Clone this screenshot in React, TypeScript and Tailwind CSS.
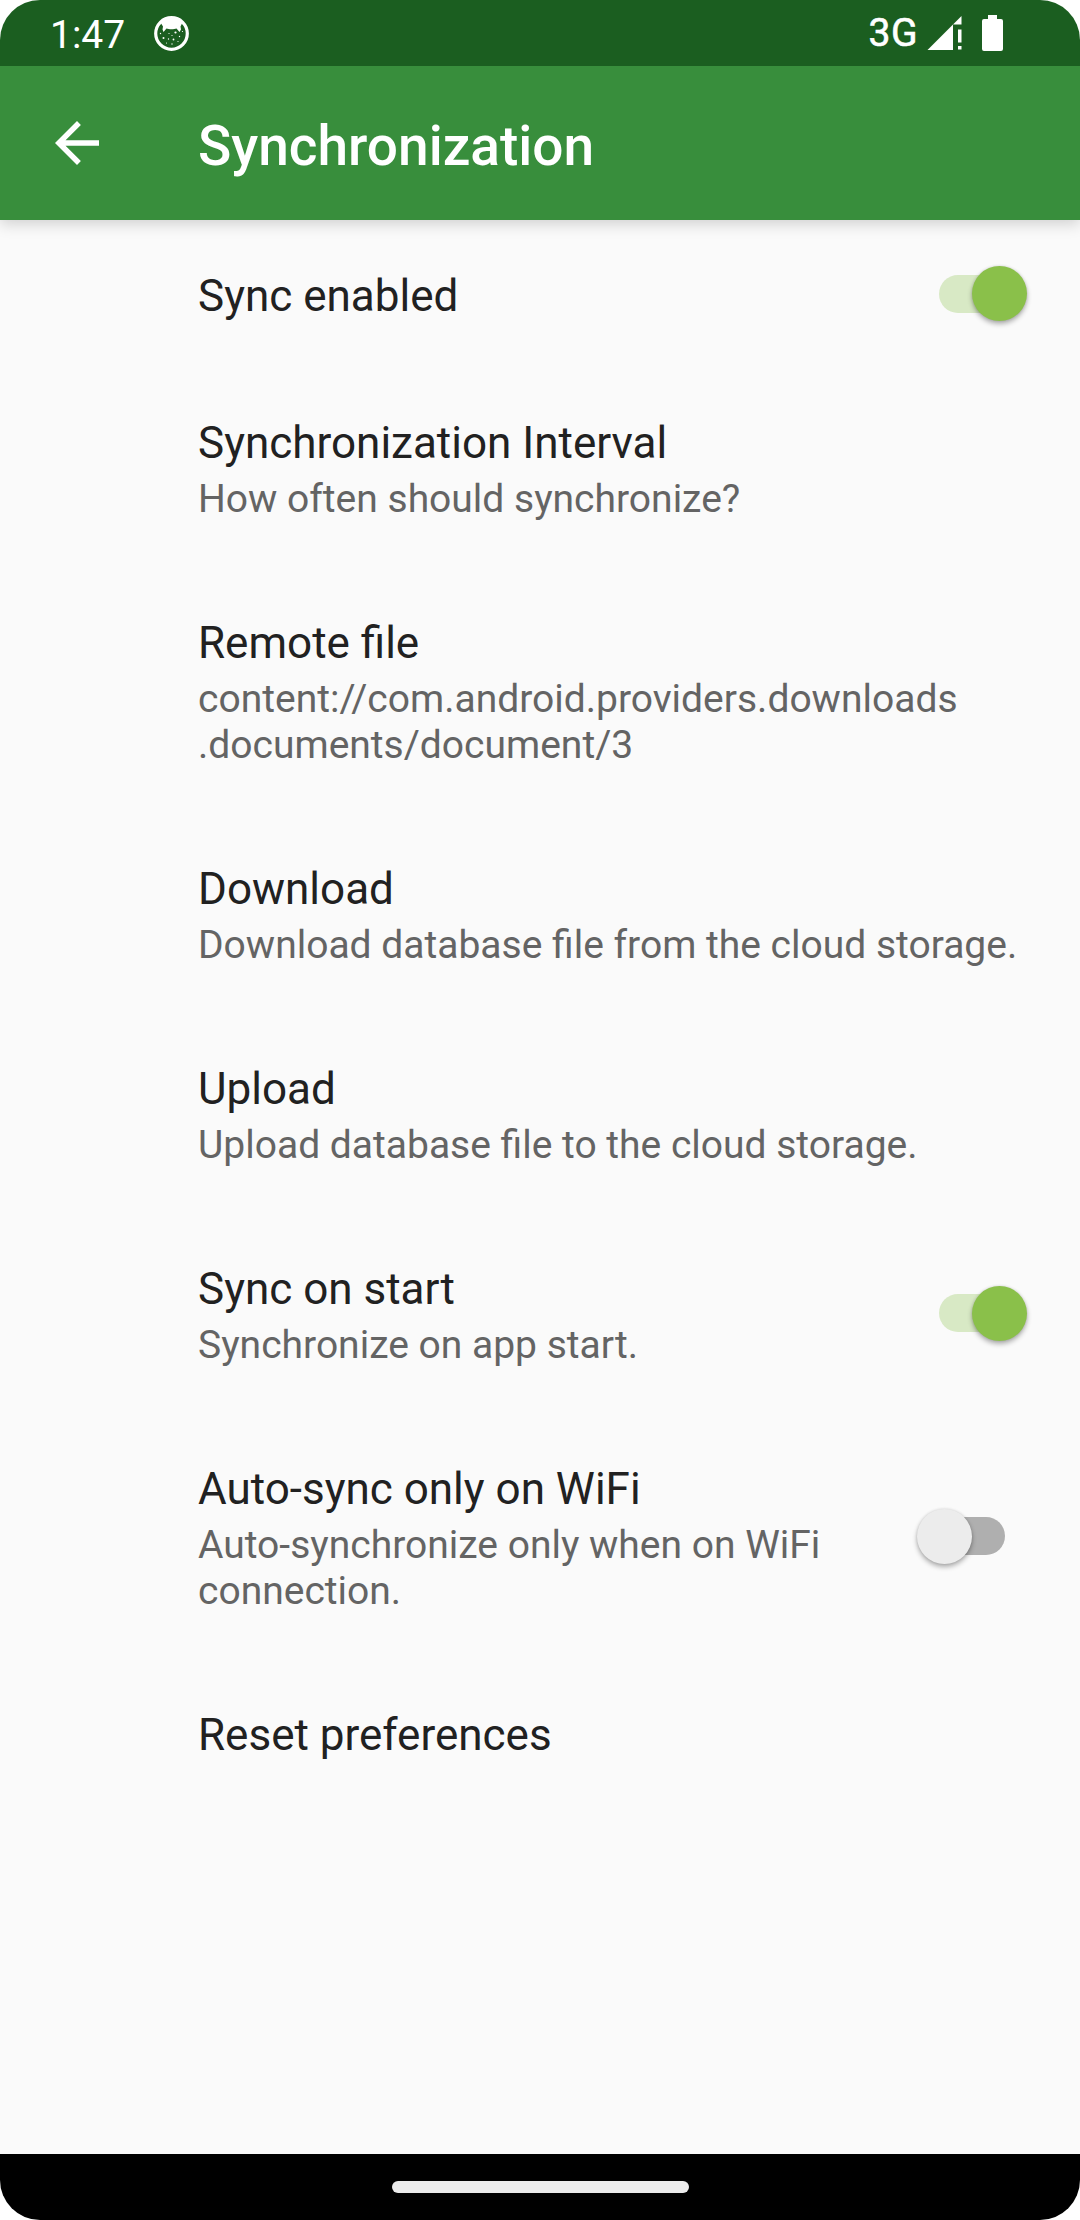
type Preference = {
  title: string;
  summary?: string;
  checked?: boolean;
};

const preferences: Preference[] = [
  { title: "Sync enabled", checked: true },
  { title: "Synchronization Interval", summary: "How often should synchronize?" },
  {
    title: "Remote file",
    summary: "content://com.android.providers.downloads\n.documents/document/3",
  },
  { title: "Download", summary: "Download database file from the cloud storage." },
  { title: "Upload", summary: "Upload database file to the cloud storage." },
  { title: "Sync on start", summary: "Synchronize on app start.", checked: true },
  {
    title: "Auto-sync only on WiFi",
    summary: "Auto-synchronize only when on WiFi\nconnection.",
    checked: false,
  },
  { title: "Reset preferences" },
];

function Switch({ checked }: { checked: boolean }) {
  return (
    <div
      role="switch"
      aria-checked={checked}
      className={`mr-[31px] flex h-[38px] w-[66px] shrink-0 items-center rounded-full ${
        checked ? "justify-end bg-[#d8e9c5]" : "justify-start bg-[#afafaf]"
      }`}
    >
      <div
        className={`size-[55px] shrink-0 rounded-full shadow-[0_3px_5px_rgba(0,0,0,0.3),0_0_3px_rgba(0,0,0,0.12)] ${
          checked ? "-mr-[22px] bg-[#8ac04a]" : "-ml-[22px] bg-[#ececec]"
        }`}
      />
    </div>
  );
}

function PreferenceRow({ title, summary, checked }: Preference) {
  return (
    <div className="flex items-center py-[44px] pl-[198px] pr-[44px]">
      <div className="min-w-0 flex-1">
        <div className="h-[59px] whitespace-nowrap text-[44px] leading-[65px] text-[#212121]">{title}</div>
        {summary && (
          <div className="whitespace-pre pb-[1px] pt-[6px] text-[39px] leading-[46px] text-[#646464]">{summary}</div>
        )}
      </div>
      {checked !== undefined && <Switch checked={checked} />}
    </div>
  );
}

function NotificationIcon() {
  return (
    <svg className="size-[35px]" viewBox="0 0 35 35">
      <circle cx="17.5" cy="17.5" r="15.8" fill="none" stroke="#fff" strokeWidth="3.2" />
      <path
        fill="#fff"
        d="M6.5 6.5C12 0.5 23 0.5 28.5 6.5L26.5 10.5 27 13.5 25.5 16 22.5 12.5C20 13.5 15 13.5 12.5 12.5L9.5 16 8.5 13.5 9 10.5Z"
      />
      <g fill="#fff">
        <circle cx="9.5" cy="22" r="1" />
        <circle cx="21.5" cy="16.5" r="1.1" />
        <circle cx="15" cy="17.5" r="0.6" />
        <circle cx="19.5" cy="23.5" r="0.9" />
        <circle cx="14.5" cy="23" r="0.7" />
        <circle cx="25.5" cy="20.5" r="0.7" />
        <circle cx="6.5" cy="17.5" r="0.7" />
        <circle cx="18" cy="28" r="0.7" />
        <circle cx="12.5" cy="27" r="0.6" />
        <circle cx="24" cy="25.5" r="0.6" />
        <circle cx="28.5" cy="15.5" r="0.6" />
        <circle cx="18" cy="19.5" r="0.6" />
      </g>
    </svg>
  );
}

function SignalIcon() {
  return (
    <svg className="h-[35px] w-[35px]" viewBox="0 0 35 35" fill="#fff">
      <path d="M0.5 34 34.5 0V8.5H26V34Z" />
      <path d="M31 13.5h3.5v13H31zM31 30h3.5v3.5H31z" />
    </svg>
  );
}

function BatteryIcon() {
  return (
    <svg className="h-[36px] w-[21px]" viewBox="0 0 21 36" fill="#fff">
      <path d="M6 0h9v4h4a2 2 0 0 1 2 2v28a2 2 0 0 1-2 2H2a2 2 0 0 1-2-2V6a2 2 0 0 1 2-2h4z" />
    </svg>
  );
}

export default function App() {
  return (
    <div className="h-[2220px] w-[1080px] bg-white">
      <div className="flex h-full flex-col overflow-hidden rounded-[40px] bg-[#fafafa] font-['Roboto',sans-serif]">
        <div className="z-20 flex h-[66px] shrink-0 items-center bg-[#1b5e20] pl-[50px] pr-[77px] text-white">
          <div className="w-[104px] pt-[3px] text-[39px] leading-[46px]">1:47</div>
          <NotificationIcon />
          <div className="ml-auto flex items-center">
            <div className="mr-[9px] text-[39px] leading-[46px] tracking-[0.5px] [-webkit-text-stroke:0.6px_white]">
              3G
            </div>
            <SignalIcon />
            <div className="w-[20px]" />
            <BatteryIcon />
          </div>
        </div>

        <div className="z-10 flex h-[154px] shrink-0 items-center bg-[#388e3c] pl-[55px] text-white shadow-[0_4px_14px_rgba(0,0,0,0.17)]">
          <svg className="h-[44px] w-[44px]" viewBox="4 4 16 16" fill="#fff">
            <path d="M20 11H7.83l5.59-5.59L12 4l-8 8 8 8 1.41-1.41L7.83 13H20v-2z" />
          </svg>
          <h1 className="ml-[99px] pt-[6px] text-[55px] font-medium leading-[64px]">Synchronization</h1>
        </div>

        <main className="flex-1">
          {preferences.map((preference) => (
            <PreferenceRow key={preference.title} {...preference} />
          ))}
        </main>

        <div className="flex h-[66px] shrink-0 items-center justify-center bg-black">
          <div className="h-[12px] w-[297px] rounded-full bg-[#ececec]" />
        </div>
      </div>
    </div>
  );
}
